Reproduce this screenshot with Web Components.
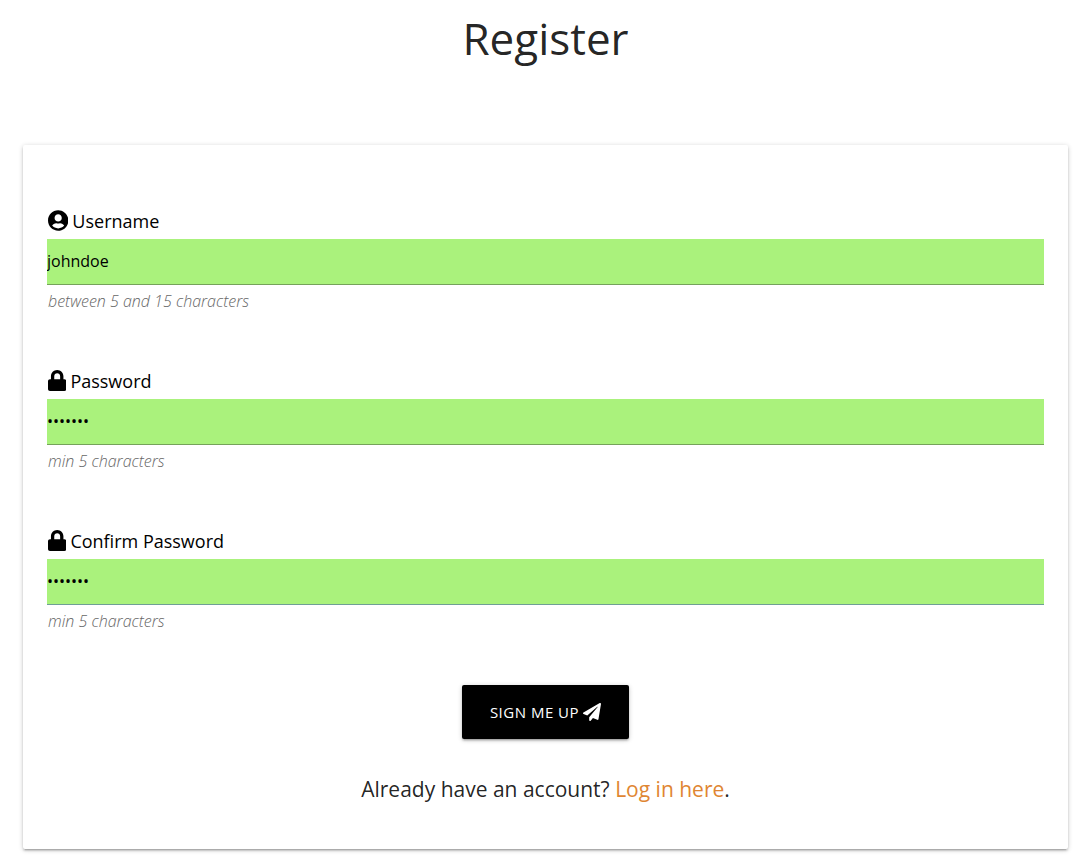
<!DOCTYPE html>
<html lang="en">
<head>
<meta charset="utf-8">
<meta name="viewport" content="width=device-width, initial-scale=1">
<title>Register</title>
<style>
  body { margin: 0; background: #fff; color: rgba(0,0,0,.87); font-family: "Open Sans", "Noto Sans", sans-serif; }
</style>
</head>
<body>
<register-page>
  <form-card>
    <form-field kind="text" icon="user" label="Username" value="johndoe" hint="between 5 and 15 characters"></form-field>
    <form-field kind="password" icon="lock" label="Password" value="abcdefg" hint="min 5 characters"></form-field>
    <form-field kind="password" icon="lock" label="Confirm Password" value="abcdefg" hint="min 5 characters" style="--line: #6f9f95"></form-field>
    <submit-button slot="actions">Sign me up</submit-button>
    <login-prompt slot="actions"></login-prompt>
  </form-card>
</register-page>
<script>
const ICONS = {
  user: ['0 0 496 512', 'M248 8C111 8 0 119 0 256s111 248 248 248 248-111 248-248S385 8 248 8zm0 96c48.6 0 88 39.4 88 88s-39.4 88-88 88-88-39.4-88-88 39.4-88 88-88zm0 344c-58.7 0-111.3-26.6-146.5-68.2 18.8-35.4 55.6-59.8 98.5-59.8 2.4 0 4.8.4 7.1 1.1 13 4.2 26.6 6.9 40.9 6.9 14.3 0 28-2.7 40.9-6.9 2.3-.7 4.7-1.1 7.1-1.1 42.9 0 79.7 24.4 98.5 59.8C359.3 421.4 306.7 448 248 448z'],
  lock: ['0 0 448 512', 'M400 224h-24v-72C376 68.2 307.8 0 224 0S72 68.2 72 152v72H48c-26.5 0-48 21.5-48 48v192c0 26.5 21.5 48 48 48h352c26.5 0 48-21.5 48-48V272c0-26.5-21.5-48-48-48zm-104 0H152v-72c0-39.7 32.3-72 72-72s72 32.3 72 72v72z'],
  plane: ['0 0 512 512', 'M476 3.2L12.5 270.6c-18.1 10.4-15.8 35.6 2.2 43.2L121 358.4l287.3-253.2c5.5-4.9 13.3 2.6 8.6 8.3L176 407v80.5c0 23.6 28.5 32.9 42.5 15.8L282 426l124.6 52.2c14.2 6 30.4-2.9 33-18.2l72-432C515 7.8 493.3-6.8 476 3.2z']
};
const icon = name => `<svg viewBox="${ICONS[name][0]}" fill="currentColor" aria-hidden="true"><path d="${ICONS[name][1]}"/></svg>`;

customElements.define('register-page', class extends HTMLElement {
  constructor() {
    super();
    this.attachShadow({ mode: 'open' }).innerHTML = `
      <style>
        :host { display: block; box-sizing: border-box; padding: 14px 7px 8px 23px; }
        h1 { margin: 0 0 83px; font-size: 44px; line-height: 48px; font-weight: 400; text-align: center; }
      </style>
      <h1>Register</h1>
      <main><slot></slot></main>`;
  }
});

customElements.define('form-card', class extends HTMLElement {
  constructor() {
    super();
    this.attachShadow({ mode: 'open' }).innerHTML = `
      <style>
        :host { display: block; background: #fff; border-radius: 2px;
          box-shadow: 0 2px 2px 0 rgba(0,0,0,.14), 0 3px 1px -2px rgba(0,0,0,.12), 0 1px 5px 0 rgba(0,0,0,.2); }
        form { display: grid; gap: 52px; padding: 60px 24px 44px; }
        .actions { display: flex; flex-direction: column; align-items: center; gap: 34px; }
      </style>
      <form>
        <slot></slot>
        <div class="actions"><slot name="actions"></slot></div>
      </form>`;
  }
});

customElements.define('form-field', class extends HTMLElement {
  connectedCallback() {
    const a = n => this.getAttribute(n);
    this.attachShadow({ mode: 'open' }).innerHTML = `
      <style>
        :host { display: block; }
        label { display: flex; align-items: center; gap: 4px; height: 32px; margin-bottom: 2px; padding-left: 1px; color: #000; font-size: 18px; line-height: 28px; }
        svg { height: 21px; flex: none; margin-bottom: 2px; }
        input { display: block; box-sizing: border-box; width: 100%; height: 46px; margin: 0; padding: 0 0 2px; border: 0;
          border-bottom: 1px solid var(--line, #75a35a); border-radius: 0; outline: 0; background: #aaf27c;
          color: #000; font: 16px "Open Sans", "Noto Sans", sans-serif; }
        p { margin: 4px 1px 0; color: #666; font-size: 16px; line-height: 24px; font-style: italic; font-weight: 300; }
      </style>
      <label for="field">${icon(a('icon'))}<span>${a('label')}</span></label>
      <input id="field" type="${a('kind')}" value="${a('value')}" aria-describedby="hint">
      <p id="hint">${a('hint')}</p>`;
  }
});

customElements.define('submit-button', class extends HTMLElement {
  constructor() {
    super();
    this.attachShadow({ mode: 'open' }).innerHTML = `
      <style>
        :host { display: block; }
        button { display: flex; align-items: center; gap: 4px; height: 54px; padding: 0 28px; border: 0; border-radius: 2px;
          background: #000; color: #fff; font: 15px "Open Sans", "Noto Sans", sans-serif; letter-spacing: .5px; text-transform: uppercase;
          box-shadow: 0 2px 2px 0 rgba(0,0,0,.14), 0 3px 1px -2px rgba(0,0,0,.12), 0 1px 5px 0 rgba(0,0,0,.2); }
        svg { width: 18px; height: 18px; }
      </style>
      <button type="button"><span><slot></slot></span>${icon('plane')}</button>`;
  }
});

customElements.define('login-prompt', class extends HTMLElement {
  constructor() {
    super();
    this.attachShadow({ mode: 'open' }).innerHTML = `
      <style>
        :host { display: block; }
        p { margin: 0; font-size: 21px; line-height: 32px; text-align: center; }
        a { color: #df8632; text-decoration: none; }
      </style>
      <p>Already have an account? <a href="#login">Log in here</a>.</p>`;
  }
});
</script>
</body>
</html>
